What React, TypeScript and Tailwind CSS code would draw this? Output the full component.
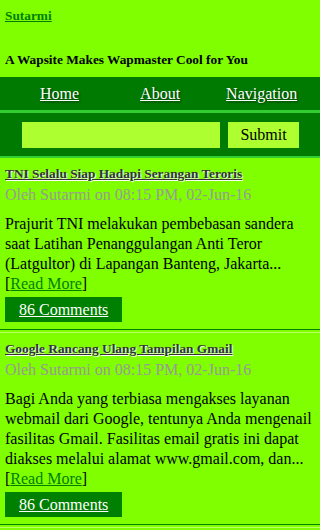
export default function App() {
  const posts = [
    {
      title: "TNI Selalu Siap Hadapi Serangan Teroris",
      body: "Prajurit TNI melakukan pembebasan sandera saat Latihan Penanggulangan Anti Teror (Latgultor) di Lapangan Banteng, Jakarta...",
    },
    {
      title: "Google Rancang Ulang Tampilan Gmail",
      body: "Bagi Anda yang terbiasa mengakses layanan webmail dari Google, tentunya Anda mengenail fasilitas Gmail. Fasilitas email gratis ini dapat diakses melalui alamat www.gmail.com, dan...",
    },
  ];

  return (
    <div className="min-h-[530px] bg-[#7fff00] font-['Liberation_Serif',serif] text-black">
      <div className="px-[5px] pt-[8px] pb-[9px]">
        <div className="text-[13.33px] font-bold leading-[16px]">
          <a href="#" className="text-[#008000] underline">
            Sutarmi
          </a>
        </div>
        <h2 className="mt-[28px] text-[13.33px] font-bold leading-[16px]">
          A Wapsite Makes Wapmaster Cool for You
        </h2>
      </div>

      <div className="flex h-[33px] items-center bg-[#007a00] text-[16px] leading-[20px] text-white [text-shadow:1px_1px_2px_#003300]">
        <a href="#" className="ml-[40px] underline">Home</a>
        <a href="#" className="ml-[61px] underline">About</a>
        <a href="#" className="ml-[46px] underline">Navigation</a>
      </div>
      <div className="h-[3px] bg-[#32cd32]" />
      <div className="flex h-[43px] items-center bg-[#007a00] pl-[22px]">
        <input className="h-[26px] w-[198px] bg-[#adff2f] outline-none" />
        <button className="ml-[8px] h-[26px] w-[71px] bg-[#adff2f] text-[16px]">Submit</button>
      </div>
      <div className="h-[2px] bg-[#32cd32]" />

      {posts.map((p) => (
        <div key={p.title}>
          <div className="px-[5px] pt-[7px] pb-[7px]">
            <div className="text-[13.33px] font-bold leading-[18px]">
              <a href="#" className="text-[#333] underline [text-shadow:1px_1px_1px_#ffffff]">
                {p.title}
              </a>
            </div>
            <div className="mt-[2px] text-[16px] leading-[20px] text-[#999]">
              Oleh Sutarmi on 08:15 PM, 02-Jun-16
            </div>
            <p className="mt-[9px] text-[16px] leading-[20px]">
              {p.body}
              <br />[
              <a href="#" className="text-[#008000] underline">Read More</a>]
            </p>
            <div className="mt-[3px]">
              <a
                href="#"
                className="inline-block h-[25px] bg-[#008000] px-[14px] text-[16px] leading-[25px] text-white underline"
              >
                86 Comments
              </a>
            </div>
          </div>
          <div className="h-[4px] border-t border-b border-t-[#008000] border-b-[#b8ff60]" />
        </div>
      ))}
    </div>
  );
}
